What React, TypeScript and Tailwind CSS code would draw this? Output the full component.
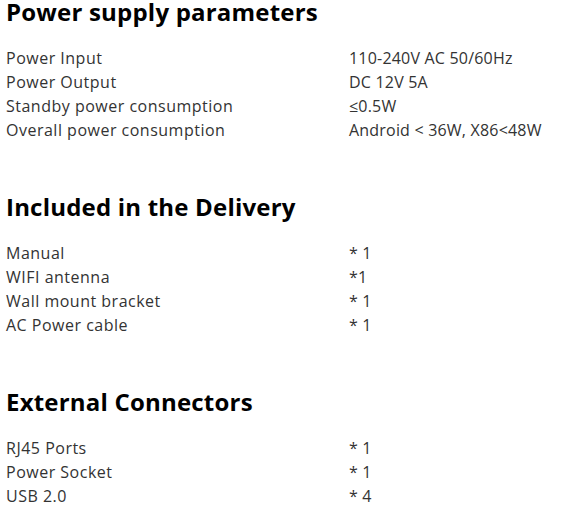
import React from "react";

const sections = [
  {
    title: "Power supply parameters",
    rows: [
      ["Power Input", "110-240V AC 50/60Hz"],
      ["Power Output", "DC 12V 5A"],
      ["Standby power consumption", "≤0.5W"],
      ["Overall power consumption", "Android < 36W, X86<48W"],
    ],
  },
  {
    title: "Included in the Delivery",
    rows: [
      ["Manual", "* 1"],
      ["WIFI antenna", "*1"],
      ["Wall mount bracket", "* 1"],
      ["AC Power cable", "* 1"],
    ],
  },
  {
    title: "External Connectors",
    rows: [
      ["RJ45 Ports", "* 1"],
      ["Power Socket", "* 1"],
      ["USB 2.0", "* 4"],
    ],
  },
];

export default function App() {
  return (
    <div
      className="w-[572px] h-[512px] overflow-hidden bg-white px-[6px] flex flex-col gap-[53px]"
      style={{ fontFamily: '"Open Sans", sans-serif' }}
    >
      {sections.map((s) => (
        <div key={s.title} className="flex flex-col">
          <h2 className="text-[24px] leading-[24px] font-bold text-black tracking-[0.2px] mb-[22px]">
            {s.title}
          </h2>
          <div className="flex flex-col">
            {s.rows.map(([k, v]) => (
              <div key={k} className="grid grid-cols-[343px_1fr] text-[16px] leading-[24px] text-[#333333]">
                <span className="tracking-[0.5px]">{k}</span>
                <span className="tracking-[0.2px]">{v}</span>
              </div>
            ))}
          </div>
        </div>
      ))}
    </div>
  );
}
